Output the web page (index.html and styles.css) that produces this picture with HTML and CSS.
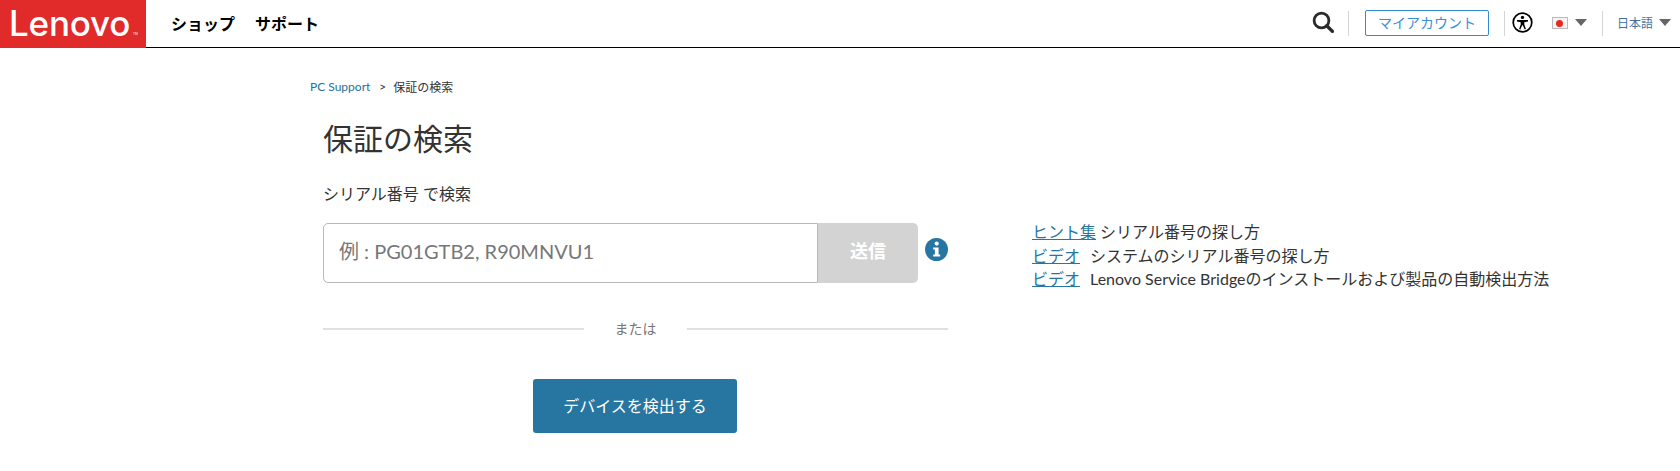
FILE: index.html
```html
<!DOCTYPE html>
<html lang="ja">
<head>
<meta charset="utf-8">
<title>保証の検索</title>
<link rel="stylesheet" href="styles.css">
</head>
<body>
<header class="header">
  <a class="logo"><span class="logo-text">Lenovo</span><span class="logo-tm">TM</span></a>
  <nav class="nav"><a>ショップ</a><a>サポート</a></nav>
  <div class="tools">
    <svg class="search" width="22" height="22" viewBox="0 0 22 22"><circle cx="9.5" cy="9.5" r="7.4" fill="none" stroke="#2b2b2b" stroke-width="2.8"/><path d="M14.8 14.8 20.4 20.4" stroke="#2b2b2b" stroke-width="3.4" stroke-linecap="round"/></svg>
    <span class="divider div-a"></span>
    <a class="account">マイアカウント</a>
    <span class="divider div-b"></span>
    <svg class="access" width="21" height="21" viewBox="0 0 21 21"><circle cx="10.5" cy="10.5" r="9.3" fill="none" stroke="#000" stroke-width="1.7"/><circle cx="10.5" cy="5.4" r="1.7"/><path d="M5 8H16V9.4L12.3 10.2V12.6L13.9 17 12.7 17.4 10.8 13.2H10.2L8.3 17.4 7.1 17 8.7 12.6V10.2L5 9.4Z"/></svg>
    <span class="flag"><span class="sun"></span></span>
    <span class="caret caret-flag"></span>
    <span class="divider div-c"></span>
    <a class="lang">日本語</a>
    <span class="caret caret-lang"></span>
  </div>
</header>
<main class="main">
  <div class="crumbs"><a>PC Support</a><span class="sep">&gt;</span><span>保証の検索</span></div>
  <div class="content">
    <section class="left">
      <h1 class="title">保証の検索</h1>
      <p class="sub">シリアル番号 で検索</p>
      <div class="search-row">
        <form class="form">
          <input class="input" type="text" placeholder="例 : PG01GTB2, R90MNVU1">
          <button class="submit" type="button">送信</button>
        </form>
        <svg class="info" width="23" height="23" viewBox="0 0 23 23"><circle cx="11.5" cy="11.5" r="11.5" fill="#2676a1"/><circle cx="11.7" cy="5.6" r="2.1" fill="#fff"/><path d="M8.2 9.4H13.6V16.6H15.2V18.6H8.2V16.6H9.9V11.4H8.2Z" fill="#fff"/></svg>
      </div>
      <div class="or"><span class="or-text">または</span></div>
      <div class="detect-wrap"><button class="detect" type="button">デバイスを検出する</button></div>
    </section>
    <aside class="links">
      <p><a>ヒント集</a> シリアル番号の探し方</p>
      <p><a>ビデオ</a><span class="gap">システムのシリアル番号の探し方</span></p>
      <p><a>ビデオ</a><span class="gap">Lenovo Service Bridgeのインストールおよび製品の自動検出方法</span></p>
    </aside>
  </div>
</main>
</body>
</html>
```
FILE: styles.css
```css
* { box-sizing: border-box; }
html, body { margin: 0; padding: 0; }
body { background: #fff; color: #333; font-family: Lato, "Noto Sans CJK JP", sans-serif; overflow: hidden; height: 471px; }
.header { display: flex; align-items: center; height: 48px; border-bottom: 1px solid #000; }
.logo { position: relative; width: 146px; height: 48px; margin-bottom: -1px; padding: 0 0 3px 9px; background: #e12a2a; color: #fff; display: flex; align-items: center; flex: none; }
.logo-text { font-family: Inter, sans-serif; font-size: 35px; font-weight: 500; line-height: 44px; letter-spacing: -0.2px; }
.logo-tm { position: absolute; left: 133px; top: 32px; font-size: 3px; font-family: Inter, sans-serif; }
.nav { display: flex; gap: 20px; margin: -1px 0 0 25px; font-size: 16px; font-weight: 700; color: #000; }
.tools { margin-left: auto; display: flex; align-items: center; height: 47px; padding-right: 9px; }
.search { margin: -3px 14px 0 0; }
.divider { width: 1px; height: 25px; background: #d4d4d4; }
.account { margin: -2px 15px 0 16px; width: 124px; height: 26px; border: 1px solid #2e8bd6; border-radius: 2px; color: #3b8fd8; font-size: 14px; line-height: 23px; text-align: center; }
.access { margin: -2px 19px 0 7px; }
.flag { width: 16px; height: 12px; margin-top: -1px; border: 1px solid #bbb; background: #f3f3f3; display: flex; align-items: center; justify-content: center; }
.sun { width: 7px; height: 7px; border-radius: 50%; background: #e8281e; }
.caret { width: 0; height: 0; border-left: 6px solid transparent; border-right: 6px solid transparent; border-top: 7px solid #666; margin-left: 7px; }
.caret-flag { margin: -3px 15px 0 7px; }
.caret-lang { margin: -3px 0 0 6px; }
.lang { margin: -2px 0 0 14px; font-size: 12px; color: #44709a; }
.main { padding-left: 310px; }
.crumbs { display: flex; align-items: center; height: 18px; margin-top: 29px; font-size: 12px; color: #333; }
.crumbs a { color: #2a6f96; font-size: 12px; }
.sep { margin: 0 7px 0 9px; }
.content { display: flex; padding-left: 13px; }
.left { width: 625px; flex: none; }
.title { margin: 25px 0 0; font-size: 30px; line-height: 36px; font-weight: 400; color: #333; }
.sub { margin: 28px 0 0; font-size: 16px; line-height: 20px; }
.search-row { display: flex; align-items: center; margin-top: 19px; }
.form { display: flex; width: 595px; height: 60px; }
.input { width: 495px; height: 60px; border: 1px solid #b8b8b8; border-radius: 5px 0 0 5px; padding: 0 15px 4px; font: 20px Lato, "Noto Sans CJK JP", sans-serif; color: #333; outline: 0; }
.input::placeholder { color: #777; opacity: 1; }
.submit { width: 100px; height: 60px; border: 0; border-radius: 0 5px 5px 0; background: #d3d3d3; color: #fff; font: 700 18px Lato, "Noto Sans CJK JP", sans-serif; padding: 0 0 6px; }
.info { margin: 0 0 8px 7px; }
.or { width: 625px; margin-top: 35px; display: flex; align-items: center; font-size: 14px; color: #777; height: 20px; }
.or::before, .or::after { content: ""; flex: 1; height: 2px; margin-top: 1px; background: #e0e0e0; }
.or-text { width: 103px; text-align: center; }
.detect-wrap { width: 624px; display: flex; justify-content: center; margin-top: 41px; }
.detect { width: 204px; height: 54px; border: 0; border-radius: 3px; background: #2676a1; color: #fff; font: 16px Lato, "Noto Sans CJK JP", sans-serif; padding: 0 0 2px; }
.links { margin: 125px 0 0 84px; font-size: 16px; line-height: 23.5px; white-space: nowrap; }
.links p { margin: 0; }
.links a { color: #2676a1; text-decoration: underline; }
.gap { margin-left: 10px; }
```
